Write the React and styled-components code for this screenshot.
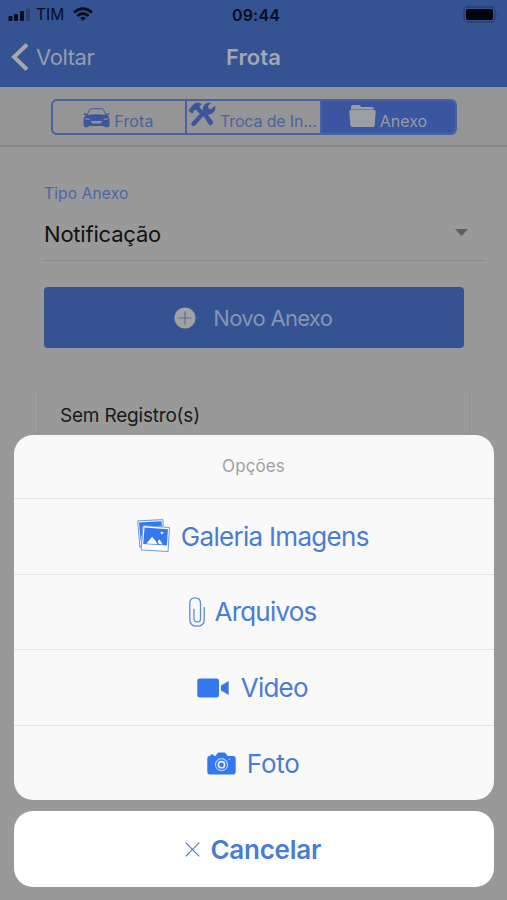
import React from 'react';
import styled, { createGlobalStyle } from 'styled-components';

const GlobalStyle = createGlobalStyle`
  * { box-sizing: border-box; }
  body { margin: 0; font-family: Inter, "Liberation Sans", sans-serif; background: #999; overflow: hidden; }
  button { font: inherit; border: 0; background: none; padding: 0; }
  svg { display: block; flex: none; }
`;

const Screen = styled.div`
  position: relative;
  width: 507px;
  height: 900px;
  overflow: hidden;
  background: #999;
`;

const Header = styled.header`
  height: 87px;
  background: #355293;
`;

const StatusBar = styled.div`
  height: 29px;
  padding: 0 8px;
  display: grid;
  grid-template-columns: 1fr auto 1fr;
  align-items: center;
  color: #080d1b;
`;

const Carrier = styled.div`
  display: flex;
  align-items: center;
  font-size: 15.5px;
  svg:last-child { margin-left: 9px; }
  span { margin-left: 6px; }
`;

const Clock = styled.time`
  font-size: 16px;
  font-weight: 600;
  letter-spacing: 0.2px;
  margin-left: 5px;
`;

const BatterySlot = styled.div`
  justify-self: end;
`;

const NavBar = styled.div`
  height: 56px;
  padding-left: 11px;
  display: grid;
  grid-template-columns: 1fr auto 1fr;
  align-items: center;
`;

const BackButton = styled.button`
  display: flex;
  align-items: center;
  gap: 7px;
  color: #949caf;
  font-size: 22px;
  letter-spacing: -0.4px;
`;

const Title = styled.h1`
  margin: 0 11px 0 0;
  color: #a3a7b2;
  font-size: 22px;
  font-weight: 600;
  letter-spacing: 0.1px;
`;

const TabStrip = styled.div`
  height: 60px;
  padding: 12px 50px 0 51px;
  background: #959595;
  border-bottom: 2px solid #878787;
`;

const Segments = styled.div`
  height: 36px;
  display: grid;
  grid-template-columns: 134px 135px 1fr;
  border: 2px solid #4862a1;
  border-radius: 6px;
  overflow: hidden;
`;

const Segment = styled.button`
  display: flex;
  align-items: flex-end;
  justify-content: ${p => (p.$tight ? 'flex-start' : 'center')};
  gap: ${p => p.$gap || 4}px;
  padding: 0 ${p => p.$shift || 0}px 5px ${p => p.$indent || 0}px;
  overflow: hidden;
  color: ${p => (p.$active ? '#989ca5' : '#4b629c')};
  background: ${p => (p.$active ? '#3a56a0' : 'transparent')};
  border-right: ${p => (p.$active ? 0 : '2px')} solid #4862a1;
  font-size: 16px;
`;

const SegmentText = styled.span`
  line-height: 17px;
  margin-bottom: -2px;
  white-space: nowrap;
  letter-spacing: ${p => p.$spacing || 0}px;
`;

const Field = styled.div`
  margin: 36px 22px 0 44px;
  height: 78px;
  border-bottom: 1px solid #888;
`;

const FieldLabel = styled.div`
  height: 22px;
  line-height: 22px;
  color: #4d64a5;
  font-size: 15.5px;
  letter-spacing: 0.15px;
`;

const FieldValue = styled.div`
  height: 58px;
  padding: 0 17px 0 0;
  display: flex;
  align-items: center;
  justify-content: space-between;
  color: #111;
  font-size: 22px;
  letter-spacing: -0.2px;
  svg { margin-top: -4px; }
`;

const PrimaryButton = styled.button`
  width: 420px;
  height: 61px;
  margin: 26px 0 0 44px;
  padding-right: 2px;
  display: flex;
  align-items: center;
  justify-content: center;
  gap: 17.5px;
  border-radius: 4px;
  background: #355293;
  color: #8794b3;
  font-size: 22px;
  letter-spacing: -0.7px;
`;

const RecordCard = styled.div`
  margin: 43px 37px 0 38px;
  height: 60px;
  padding: 14px 21px;
  border: solid #8e8e8e;
  border-width: 0 1px;
  color: #191919;
  font-size: 19px;
  line-height: 22px;
  letter-spacing: -0.2px;
`;

const ActionSheet = styled.section`
  position: absolute;
  left: 14px;
  right: 13px;
  bottom: 13px;
  display: grid;
  gap: 11px;
`;

const ActionGroup = styled.div`
  border-radius: 19px;
  overflow: hidden;
  background: ${p => (p.$solid ? '#fff' : '#f9f9f9')};
`;

const SheetTitle = styled.div`
  height: 63.5px;
  padding: 0 1px 1px 0;
  display: flex;
  align-items: center;
  justify-content: center;
  color: #a0a0a0;
  font-size: 17px;
  letter-spacing: 0.1px;
`;

const Action = styled.button`
  width: 100%;
  height: 75.6px;
  padding-right: ${p => p.$shift ?? 2}px;
  display: flex;
  align-items: center;
  justify-content: center;
  gap: ${p => p.$gap || 10.5}px;
  border-top: ${p => (p.$strong ? 0 : '1px')} solid #e4e4e5;
  color: #477dd5;
  font-size: 26px;
  font-weight: ${p => (p.$strong ? 600 : 400)};
  letter-spacing: ${p => p.$spacing || 0}px;
`;

const SignalIcon = () => (
  <svg width="22" height="14" viewBox="0 0 22 14" fill="currentColor">
    <rect x="0.5" y="8" width="4" height="5" rx="1" />
    <rect x="6" y="6" width="4" height="7" rx="1" />
    <rect x="12" y="3" width="4" height="10" rx="1" />
    <rect x="18" y="0.5" width="4" height="12.5" rx="1" opacity=".25" />
  </svg>
);

const WifiIcon = () => (
  <svg width="20" height="15" viewBox="0 0 20 15" fill="none" stroke="currentColor" strokeWidth="2.7">
    <path d="M1 5.5Q10-2.4 19 5.5M4.3 9Q10 4 15.7 9" />
    <path d="M7.2 11Q10 8.6 12.8 11L10 14Z" fill="currentColor" stroke="none" />
  </svg>
);

const BatteryIcon = () => (
  <svg width="36" height="17" viewBox="0 0 36 17">
    <rect x="1" y="1" width="31" height="15" rx="4" fill="none" stroke="#293e6e" strokeWidth="1.4" />
    <rect x="3" y="3" width="27" height="11" rx="2" fill="#020408" />
    <path d="M34 6q2 2.5 0 5Z" fill="#293e6e" />
  </svg>
);

const BackIcon = () => (
  <svg width="18" height="28" viewBox="0 0 18 28" fill="none" stroke="#a6a8ae" strokeWidth="4">
    <path d="M16 1.5 3 14 16 26.5" />
  </svg>
);

const CarIcon = () => (
  <svg width="27" height="20" viewBox="0 0 27 20" fill="#3c559b">
    <path d="M3.8 7.500 6.300 2.200Q7 .9 8.500.8q5-.4 10 0 1.500.1 2.200 1.400l2.500 5.300" fill="none" stroke="#4b629c" strokeWidth="1.100" />
    <path d="M.4 5.400h2.800l1 1.800H1.400ZM26.600 5.400h-2.800l-1 1.800h2.800Z" />
    <path d="M3.400 6.900q10.100-1.200 20.200 0 2.900 1.700 2.900 4.800v4.600q0 2.900-1.200 2.900h-2.800q-1 0-1.300-1.200H5.800Q5.500 19.200 4.500 19.200H1.700Q.5 19.200.5 16.300v-4.600q0-3.100 2.900-4.800Z" />
    <path d="m2 10 4.800 1-.7.900-4-.7ZM25 10l-4.800 1 .7.900 4-.7ZM7.800 13h11.400l-1.300 2.500H9.100Z" fill="#8f929a" />
  </svg>
);

const ToolsIcon = () => (
  <svg width="28" height="26" viewBox="0 0 28 26" fill="#3c559b">
    <path d="m12.500 9.800 3-2.500 9.400 12.200q.9 1.200-.2 2.200l-1.500 1.300q-1.100.9-2.100-.2Z" />
    <path d="M.4 8.500 3.600 4.600Q5.700.8 9.600.7q2.600-.1 4.900 1.500l-1.700.8q-1.800.9-1 2.500l3.800 4-3.300 3-3.900-4.300Q7 7.300 5.900 8.200L5.600 10 4 11.500Z" />
    <path d="M17.200 12.100q3 1.200 6.200-.2Q27.800 9.800 27.300 5l-.7-1.200-3.400 3.400-2.600-.6-.7-2.600 3.400-3.200q-3.900-.9-6.600 1.800-2.300 2.500-1.600 6L4 20.300q-1.500 1.600 0 3.100t3.100 0Z" />
  </svg>
);

const FolderIcon = () => (
  <svg width="27" height="24" viewBox="0 0 27 24" fill="#9d9fa4">
    <path d="M2 5V2.700Q2 1 4 1h6q1 0 1.500 1l.8 1H23q2 0 2 2v.5H2Z" />
    <path d="M1.500 6h24q1.300 0 1.200 1.500l-1 13.500q-.2 2-2 2H3.300q-1.800 0-2-2L.3 7.500Q.2 6 1.500 6Z" />
  </svg>
);

const PlusCircleIcon = () => (
  <svg width="22" height="22" viewBox="0 0 22 22">
    <circle cx="11" cy="11" r="10.600" fill="#a2a2a2" />
    <path d="M11 4.500v13M4.500 11h13" stroke="#5d6d95" strokeWidth="1.200" />
  </svg>
);

const CaretIcon = () => (
  <svg width="13" height="7" viewBox="0 0 13 7"><path d="M0 0h13L6.500 7Z" fill="#5f5f5f" /></svg>
);

const GalleryIcon = () => (
  <svg width="33" height="34" viewBox="0 0 33 34">
    <path d="m.7 1.900 25.200-1.300.4 6L7 12 4 28H2.800Z" fill="#eef4fd" stroke="#6d99e3" />
    <path d="m2.100 3.600 22.400-1.400.4 4.600L5.500 7.800 4.300 21.500H3.600Z" fill="#3478ed" />
    <path d="m6.100 6.600 26.300 1.900-1.300 24-26.900-1.600Z" fill="#fff" stroke="#6d99e3" />
    <path d="m7.500 8.500 23.400 1.700-.9 16.400-23.800-1.500Z" fill="#3478ed" />
    <path d="m9.300 24.600 2.300-2.600 3.500-4.300 3 3.600 2.500 4ZM20.700 22.200l1.700-2 3.300 5.200-4-.3Z" fill="#fff" />
    <path d="m25 12 .6 1.300 1.400.6-1.400.6-.6 1.300-.6-1.300-1.400-.6 1.400-.6Z" fill="#fff" />
  </svg>
);

const ClipIcon = () => (
  <svg width="16" height="30" viewBox="0 0 16 30" fill="none" stroke="#5d8bd8" strokeWidth="1.300" strokeLinecap="round">
    <path d="M15.200 10.500v12q0 6.700-7.200 6.700T.8 22.500V6.500q0-5.700 5.400-5.700 5.300 0 5.300 5.700v15.300q0 3.200-3.200 3.200T5 21.800V12.500" />
  </svg>
);

const VideoIcon = () => (
  <svg width="32" height="20" viewBox="0 0 32 20" fill="#3478ed">
    <rect x=".3" y=".5" width="21.700" height="19" rx="2.500" />
    <path d="M24 7.500 31.700 3v14L24 12.500Z" />
  </svg>
);

const CameraIcon = () => (
  <svg width="29" height="23" viewBox="0 0 29 23">
    <path d="M2.500 4h1V2.600h3.300V4h1.400Q9 3.500 10 1.800 11 .5 12 .5h5q1 0 2 1.300Q20 3.500 20.800 4h5.700q2.200 0 2.200 2.200V20q0 2.400-2.200 2.400h-24Q.3 22.400.3 20V6.200Q.3 4 2.500 4Z" fill="#3478ed" />
    <circle cx="14.500" cy="12.700" r="6" fill="none" stroke="#b5cdf7" strokeWidth="1.200" />
    <circle cx="14.500" cy="12.700" r="3.100" fill="none" stroke="#e9f0fd" strokeWidth="1.600" />
    <circle cx="22.500" cy="7.200" r=".8" fill="#b5cdf7" />
  </svg>
);

const CloseIcon = () => (
  <svg width="15" height="15" viewBox="0 0 15 15" stroke="#557fbd" strokeWidth="1.200"><path d="m.7.7 13.600 13.600M14.300.7.7 14.300" /></svg>
);

export default function App() {
  return (
    <Screen>
      <GlobalStyle />
      <Header>
        <StatusBar>
          <Carrier><SignalIcon /><span>TIM</span><WifiIcon /></Carrier>
          <Clock>09:44</Clock>
          <BatterySlot><BatteryIcon /></BatterySlot>
        </StatusBar>
        <NavBar>
          <BackButton><BackIcon />Voltar</BackButton>
          <Title>Frota</Title>
        </NavBar>
      </Header>
      <TabStrip>
        <Segments>
          <Segment $shift={1}><CarIcon /><SegmentText $spacing={0.15}>Frota</SegmentText></Segment>
          <Segment $tight $indent={1}>
            <ToolsIcon />
            <SegmentText $spacing={-0.15}>Troca de In...</SegmentText>
          </Segment>
          <Segment $active $shift={1}><FolderIcon /><SegmentText>Anexo</SegmentText></Segment>
        </Segments>
      </TabStrip>
      <Field>
        <FieldLabel>Tipo Anexo</FieldLabel>
        <FieldValue>Notificação<CaretIcon /></FieldValue>
      </Field>
      <PrimaryButton><PlusCircleIcon />Novo Anexo</PrimaryButton>
      <RecordCard>Sem Registro(s)</RecordCard>
      <ActionSheet>
        <ActionGroup>
          <SheetTitle>Opções</SheetTitle>
          <Action $spacing={-0.7}><GalleryIcon />Galeria Imagens</Action>
          <Action $spacing={-0.8} $gap={10} $shift={3}><ClipIcon />Arquivos</Action>
          <Action $spacing={-0.8} $gap={11.5} $shift={3}><VideoIcon />Video</Action>
          <Action $spacing={-0.2} $shift={1}><CameraIcon />Foto</Action>
        </ActionGroup>
        <ActionGroup $solid>
          <Action $strong $spacing={-0.25}><CloseIcon />Cancelar</Action>
        </ActionGroup>
      </ActionSheet>
    </Screen>
  );
}
